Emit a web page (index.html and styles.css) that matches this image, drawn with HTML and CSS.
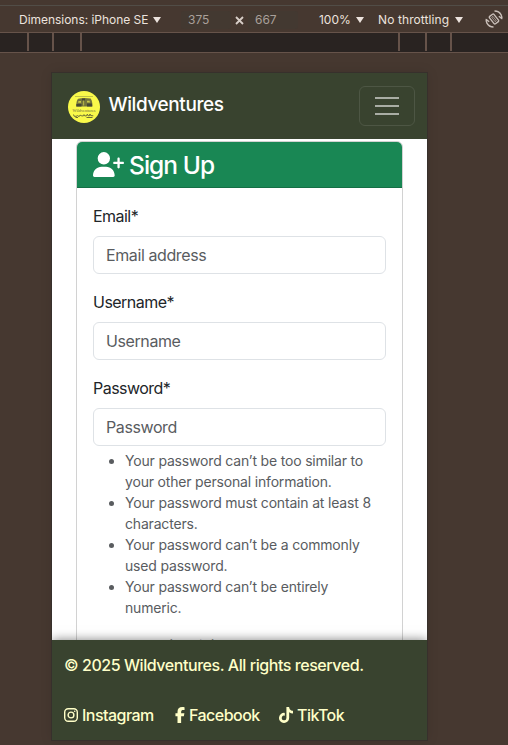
FILE: index.html
```html
<!DOCTYPE html>
<html lang="en">
<head>
<meta charset="utf-8">
<title>Wildventures – Sign Up</title>
<link rel="stylesheet" href="styles.css">
</head>
<body>
<div class="top-strip"></div>
<div class="toolbar">
  <span class="dims">Dimensions: iPhone SE</span><i class="caret"></i>
  <span class="size size-w">375</span>
  <svg class="times" viewBox="0 0 9 9"><path d="M1 1l7 7M8 1L1 8"/></svg>
  <span class="size size-h">667</span>
  <span class="zoom">100%</span><i class="caret"></i>
  <span class="throttle">No throttling</span><i class="caret caret-last"></i>
  <svg class="rotate" viewBox="0 0 18 18"><g transform="rotate(-38 9 9)"><rect x="6.200" y="4.300" width="5.600" height="9.400" rx="1"/><path d="M8.200 6.300h1.600v5.400h-1.600z" stroke-width=".6"/></g><path d="M9.500 1c3 0 5.200 1.200 6.600 3.800.7 1.400.9 2.800.6 4.200M8.500 17c-3 0-5.200-1.200-6.600-3.800-.7-1.400-.9-2.800-.6-4.200M13.800 6.200l3.200 2.400M4.200 11.800l-3.200-2.400"/></svg>
</div>
<div class="media-bar">
  <i class="t1"></i><i class="t2"></i><i class="t3"></i><i class="t4"></i><i class="t5"></i><i class="t6"></i>
</div>
<div class="device">
  <nav class="navbar">
    <svg class="logo" viewBox="0 0 32 32">
      <circle cx="16" cy="16" r="16" fill="#f9f94a"/>
      <path d="M7 5.500h18" stroke="#a9aa43" stroke-width=".7"/>
      <path d="M8 15.500c.3-4 .9-6.600 2.200-7.700 3.500-1.100 8.500-1 12.500-.2 1.200 1.600 1.700 4.300 1.900 7.900z" fill="#73743c"/>
      <path d="M10.500 10h2.500v1.800h-3zM15.300 8.600h.8v6h-.8zM19 9.800h2.500l.5 1.800H19z" fill="#c8c848"/>
      <path d="M8.500 13h5v2.500h-5zM19 12.500h5v3h-5zM14 7.500h3v2h-3z" fill="#444733"/>
      <text x="16" y="21" text-anchor="middle" textLength="23" lengthAdjust="spacingAndGlyphs" class="logo-text">Wildventures</text>
      <path d="M5.500 23.500l.6 1.700 2.400.2.700-1 .8.900 2-.4.500-1 1 1.100 2-.2.500-1.200.8 1.300h1.700l.8-1.700.8 1.600 1.600-.1.200-1.700.9 1.600 2.500.2M7.500 26.500h2.500M18.500 26.500h6" fill="none" stroke="#5c5e35" stroke-width=".9"/>
    </svg>
    <span class="brand">Wildventures</span>
    <button class="toggler" aria-label="Menu"><svg viewBox="0 0 30 30"><path d="M3 7h24M3 15h24M3 23h24"/></svg></button>
  </nav>
  <main class="content">
    <section class="card">
      <header class="card-header">
        <svg class="user-plus" viewBox="0 0 640 512"><path d="M96 128a128 128 0 1 1 256 0A128 128 0 1 1 96 128zM0 482.300C0 383.800 79.800 304 178.300 304h91.400C368.200 304 448 383.800 448 482.300c0 16.400-13.300 29.700-29.700 29.700H29.700C13.300 512 0 498.700 0 482.300zM504 312V248H440c-13.300 0-24-10.700-24-24s10.700-24 24-24h64V136c0-13.300 10.700-24 24-24s24 10.700 24 24v64h64c13.300 0 24 10.700 24 24s-10.700 24-24 24H552v64c0 13.300-10.700 24-24 24s-24-10.700-24-24z"/></svg>
        <h3>Sign Up</h3>
      </header>
      <form class="card-body">
        <label for="email">Email*</label>
        <input id="email" type="email" placeholder="Email address">
        <label for="user">Username*</label>
        <input id="user" type="text" placeholder="Username">
        <label for="pass">Password*</label>
        <input id="pass" type="password" placeholder="Password" class="with-help">
        <ul class="help">
          <li>Your password can’t be too similar to<br>your other personal information.</li>
          <li>Your password must contain at least 8<br>characters.</li>
          <li>Your password can’t be a commonly<br>used password.</li>
          <li>Your password can’t be entirely<br>numeric.</li>
        </ul>
        <label class="again">Password (again)*</label>
      </form>
    </section>
  </main>
  <footer class="footer">
    <p>© 2025 Wildventures. All rights reserved.</p>
    <div class="links">
      <a class="ig"><svg viewBox="0 0 14 14"><rect x=".7" y=".7" width="12.600" height="12.600" rx="3.500"/><circle cx="7" cy="7" r="2.900"/><circle cx="10.700" cy="3.300" r=".8" class="dot"/></svg>Instagram</a>
      <a class="fb"><svg viewBox="0 0 320 512"><path d="M80 299.300V512H196V299.300h86.500l18-97.800H196V166.900c0-51.700 20.300-71.500 72.700-71.500c16.300 0 29.400 .4 37 1.200V7.900C291.400 4 256.400 0 236.200 0C129.300 0 80 50.500 80 159.400v42.100H14v97.800H80z"/></svg>Facebook</a>
      <a class="tt"><svg viewBox="0 0 448 512"><path d="M448 209.900a210.100 210.100 0 0 1 -122.800-39.300V349.400A162.600 162.600 0 1 1 185 188.300V278.200a74.600 74.600 0 1 0 52.200 71.200V0l88 0a121.200 121.200 0 0 0 1.900 22.200h0A122.200 122.200 0 0 0 381 102.400a121.400 121.400 0 0 0 67 20.100z"/></svg>TikTok</a>
    </div>
  </footer>
</div>
</body>
</html>
```
FILE: styles.css
```css
* { box-sizing: border-box; }
body {
  margin: 0;
  height: 745px;
  overflow: hidden;
  background: #463830;
  font-family: Inter, "Liberation Sans", sans-serif;
  font-size: 16px;
  line-height: 24px;
  color: #212529;
}
svg { display: block; flex: none; }
.top-strip { height: 6px; border-bottom: 1px solid #514d47; }
.toolbar {
  height: 27px;
  display: flex;
  align-items: center;
  padding-left: 19px;
  border-bottom: 1px solid #66534a;
  font-size: 12px;
  line-height: 16px;
  letter-spacing: -0.03px;
  color: #ece3de;
  white-space: nowrap;
}
.toolbar span { flex: none; position: relative; top: 1px; }
.dims { width: 134px; }
.caret {
  flex: none;
  width: 8px;
  height: 6px;
  margin-top: 2px;
  background: #ece3de;
  clip-path: polygon(0 0, 100% 0, 50% 100%);
}
.size { height: 18px; line-height: 18px; background: #433931; color: #a9a09a; border-radius: 3px; }
.size-w { width: 50px; margin-left: 20px; padding-left: 7px; }
.size-h { width: 50px; margin-left: 4px; padding-left: 7px; }
.times { width: 9px; height: 9px; margin: 2px 0 0 4px; stroke: #d8cec8; stroke-width: 1.8; }
.zoom { width: 37px; margin-left: 21px; }
.throttle { width: 77px; margin-left: 14px; letter-spacing: 0.1px; }
.rotate { width: 18px; height: 18px; margin-left: 22px; fill: none; stroke: #c9bfb9; stroke-width: 1.4; }
.media-bar {
  height: 20px;
  display: flex;
  background: #292321;
  border-bottom: 1px solid #66534a;
}
.media-bar i { width: 2px; height: 18px; background: #66534a; }
.t1 { margin-left: 27px; }
.t2 { margin-left: 23px; }
.t3 { margin-left: 26px; }
.t4 { margin-left: 316px; }
.t5 { margin-left: 25px; }
.t6 { margin-left: 23px; }
.device {
  width: 375px;
  height: 667px;
  margin: 20px 0 0 52px;
  display: flex;
  flex-direction: column;
  background: #fff;
  box-shadow: 0 0 0 1px #37302c, 0 0 12px rgba(0, 0, 0, .12);
}
.navbar {
  flex: none;
  height: 66px;
  display: flex;
  align-items: center;
  padding: 0 12px 0 16px;
  background: #39432f;
}
.logo { width: 32px; height: 32px; margin-top: 2px; }
.logo-text { font-size: 4.5px; fill: #6d6e3a; font-family: "Liberation Serif", serif; }
.brand { margin: -2px auto 0 8.5px; font-size: 19px; font-weight: 500; letter-spacing: -0.4px; color: #fff; }
.toggler {
  width: 56px;
  height: 40px;
  padding: 4px 12px;
  background: none;
  border: 1px solid #4d5644;
  border-radius: 6px;
}
.toggler svg { width: 30px; height: 30px; fill: none; stroke: #a9ada4; stroke-width: 2; }
.content { flex: 1; min-height: 0; overflow: hidden; padding: 2px 24px 0; }
.card { height: 700px; border: 1px solid #d2d2d2; border-radius: 6px; overflow: hidden; }
.card-header {
  height: 46px;
  display: flex;
  align-items: center;
  padding: 0 16px;
  background: #198754;
  border-bottom: 1px solid #146f45;
}
.user-plus { width: 31px; height: 25px; fill: #fff; }
h3 { margin: 1px 0 0 5px; font-size: 24.5px; line-height: 30px; font-weight: 500; letter-spacing: -0.95px; color: #fff; }
.card-body { display: flex; flex-direction: column; padding: 16px 16px 0; margin: 0; }
label { height: 24px; margin-bottom: 8px; letter-spacing: -0.53px; }
.again { letter-spacing: -0.5px; white-space: nowrap; }
input {
  height: 38px;
  margin: 0 0 16px;
  padding: 6px 12px;
  border: 1px solid #dee2e6;
  border-radius: 6px;
  font: inherit;
  letter-spacing: -0.4px;
}
input::placeholder { color: #595c5f; opacity: 1; }
input.with-help { margin-bottom: 4px; }
.help { margin: 0 0 16px; padding-left: 32px; font-size: 14px; line-height: 21px; letter-spacing: -0.18px; color: #595c5f; white-space: nowrap; }
.footer {
  position: relative;
  flex: none;
  height: 100px;
  padding: 13px 12px 0;
  background: #39432f;
  color: #ffffc8;
  font-weight: 500;
  clip-path: inset(-20px 0 0 0);
  box-shadow: 0 0 10px rgba(0, 0, 0, .5);
}
.footer p { margin: 0 0 26px; letter-spacing: -0.44px; white-space: nowrap; }
.links { display: flex; letter-spacing: -0.53px; }
.links a { display: flex; align-items: center; }
.links svg { fill: #ffffc8; margin-right: 4px; }
.ig { width: 111px; }
.fb { width: 104px; }
.ig svg { width: 14px; height: 14px; fill: none; stroke: #ffffc8; stroke-width: 1.4; }
.ig .dot { fill: #ffffc8; stroke: none; }
.fb svg { width: 10px; height: 16px; }
.tt svg { width: 14px; height: 16px; }
```
